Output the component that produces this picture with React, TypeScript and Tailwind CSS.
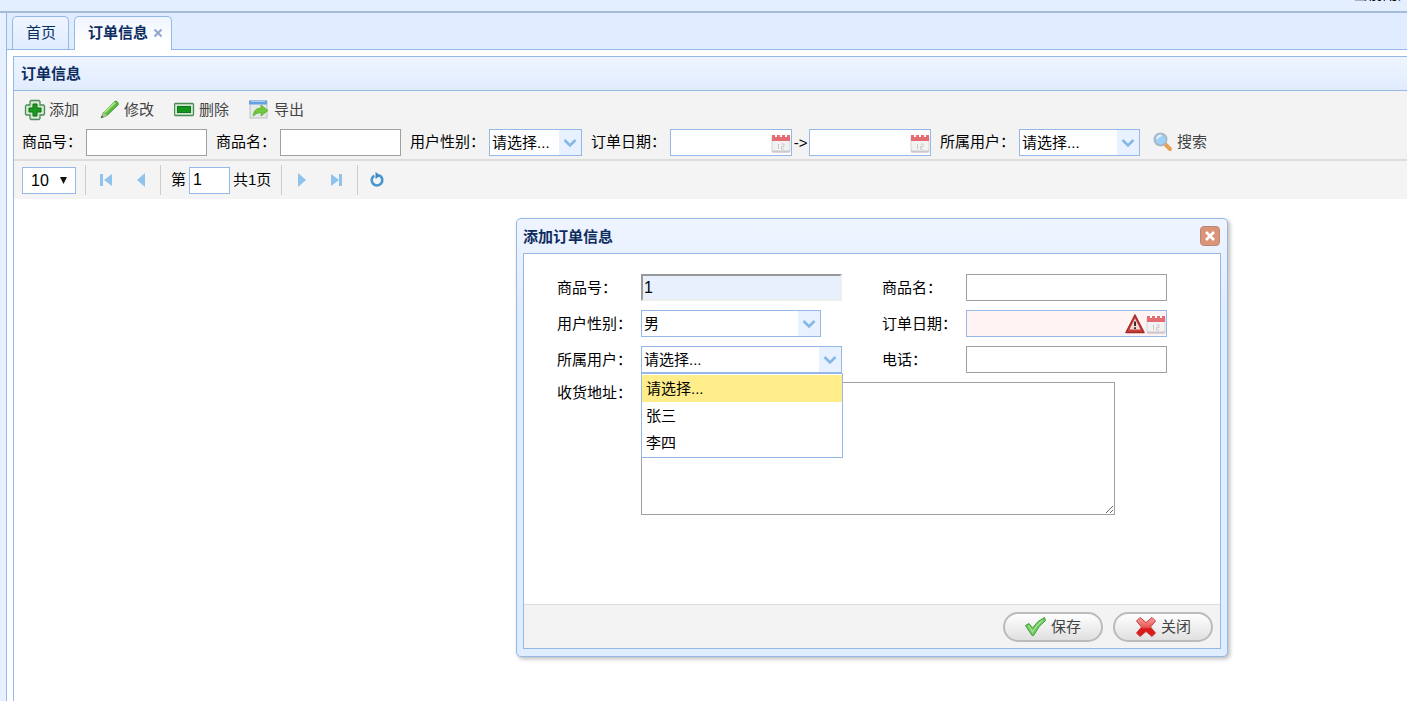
import type { ReactNode } from 'react';

const AddIcon = () => (
  <svg width="22" height="22" viewBox="0 0 22 22" aria-hidden="true">
    <path
      d="M7 1.5h8l1 1V6h3.5l1 1v8l-1 1H16v3.5l-1 1H7l-1-1V16H2.5l-1-1V7l1-1H6V2.500z"
      fill="#d3e8ce"
      stroke="#4c8a58"
      strokeWidth="1.3"
    />
    <path d="M9 5h4v4h4v4h-4v4H9v-4H5V9h4z" fill="#1c9a1c" stroke="#0d6d1c" strokeWidth="1" />
  </svg>
);

const EditIcon = () => (
  <svg width="22" height="22" viewBox="0 0 22 22" aria-hidden="true">
    <path d="M2 19l2.500-5.500L15.500 2.500q1.500-1 3 .5t.5 3L8 16.500z" fill="#5cba3d" stroke="#4b9a3c" />
    <path d="M5.500 13.500L16 3.500" stroke="#a9e28a" strokeWidth="2" />
    <path d="M2 19l2.500-5.500L8 16.500z" fill="#b9c59c" />
    <path d="M2 19l1-2.500 1.500 1.300z" fill="#355a35" />
  </svg>
);

const RemoveIcon = () => (
  <svg width="22" height="22" viewBox="0 0 22 22" aria-hidden="true">
    <rect x="0.500" y="4.500" width="19" height="12" rx="1" fill="#d3e8ce" stroke="#4c8a58" strokeWidth="1.300" />
    <rect x="3.500" y="7.500" width="13" height="6" fill="#14951c" stroke="#0d7420" />
  </svg>
);

const ExportIcon = () => (
  <svg width="22" height="22" viewBox="0 0 22 22" aria-hidden="true">
    <rect x="1" y="2" width="17" height="17" fill="#e5e8e6" stroke="#b9c3c6" />
    <path d="M0 1.500h18v4H0z" fill="#62a2df" />
    <path d="M2 2.500h14" stroke="#a8cdf0" />
    <path d="M4 17q1-8 8-8V6l7 5.500-7 5.500v-3.500q-4 0-8 3.500z" fill="#70c93c" stroke="#52a82f" strokeWidth=".7" />
  </svg>
);

const SearchIcon = () => (
  <svg width="20" height="20" viewBox="0 0 20 20" aria-hidden="true">
    <path d="M12 12l5 5" stroke="#e5a155" strokeWidth="4" strokeLinecap="round" />
    <circle cx="7.500" cy="7.500" r="6" fill="#9fd0f7" stroke="#a9b7c6" strokeWidth="2" />
    <path d="M4 7q1-3.500 4.500-3.500" fill="none" stroke="#e3f3ff" strokeWidth="2" />
  </svg>
);

const CalendarIcon = () => (
  <svg width="20" height="20" viewBox="0 0 20 20" aria-hidden="true">
    <rect x="1" y="3" width="18" height="16" rx="1" fill="#f3f2f2" stroke="#d5d2d5" />
    <path d="M1 17.500h18v2H1z" fill="#cbc8ce" />
    <path d="M1 2h18v6H1z" fill="#e36d72" />
    <path d="M4 1h2v3H4zM9 1h2v3H9zM14 1h2v3h-2z" fill="#fff" />
    <path d="M7.500 11v5M7 11.500h1M10.500 11h2.500v2.500h-2.500V16H13" fill="none" stroke="#cfc8c8" />
  </svg>
);

const WarningIcon = () => (
  <svg width="20" height="20" viewBox="0 0 20 20" aria-hidden="true">
    <path d="M10 1L19 18.500H1z" fill="#cb3f3a" stroke="#a12c2a" strokeWidth="1.500" strokeLinejoin="round" />
    <path d="M10 4.500l5.500 11h-11z" fill="#f4dcda" />
    <path d="M10 7.500v4.500M10 13.200v1.800" stroke="#2c1a1a" strokeWidth="1.800" />
  </svg>
);

const OkIcon = () => (
  <svg width="22" height="22" viewBox="0 0 22 22" aria-hidden="true">
    <path d="M.5 9.500L4 7.500 7.500 12q5-7.500 12-10.500l1 3Q14 9 8.500 19.500H7z" fill="#6cc95c" stroke="#3f9d43" />
    <path d="M3.500 9.500l4 6.500Q12 8.500 17.500 4.500" fill="none" stroke="#a5e595" strokeWidth="1.300" />
  </svg>
);

const CancelIcon = () => (
  <svg width="22" height="22" viewBox="0 0 22 22" aria-hidden="true">
    <defs>
      <linearGradient id="cancel" x2="0" y2="1">
        <stop offset="0" stopColor="#f5a3a0" />
        <stop offset=".5" stopColor="#e85a56" />
        <stop offset=".6" stopColor="#dd1a1a" />
      </linearGradient>
    </defs>
    <path
      d="M5 1.500l6 5 6-5 3.500 3.500-5 6 5 6-3.500 3.500-6-5-6 5L1.500 17l5-6-5-6z"
      fill="url(#cancel)"
      stroke="#c63c3c"
      strokeLinejoin="round"
    />
  </svg>
);

const Chevron = () => (
  <span className="pointer-events-none absolute inset-y-px right-px flex w-[22px] items-center justify-center bg-[#e8f1ff]">
    <svg width="14" height="10" viewBox="0 0 14 10" aria-hidden="true">
      <path d="M1.500 2L7 7.500 12.500 2" fill="none" stroke="#84b9e6" strokeWidth="2.600" />
    </svg>
  </span>
);

type ComboProps = { id: string; options: string[]; className: string };

const Combo = ({ id, options, className }: ComboProps) => (
  <div className={`relative ${className}`}>
    <select
      id={id}
      className="block h-[27px] w-full appearance-none border border-[#95b8e7] bg-white pr-6 pl-[2px] leading-[25px] outline-none">
      {options.map(option => (
        <option key={option}>{option}</option>
      ))}
    </select>
    <Chevron />
  </div>
);

type DateBoxProps = { id: string; label?: string; invalid?: boolean; className: string };

const DateBox = ({ id, label, invalid, className }: DateBoxProps) => (
  <div
    className={`flex h-[27px] items-center border border-[#95b8e7] ${invalid ? 'bg-[#fff3f3]' : 'bg-white'} ${className}`}>
    <input id={id} aria-label={label} type="text" className="min-w-0 flex-1 bg-transparent px-1 outline-none" />
    {invalid && <WarningIcon />}
    <button type="button" aria-label="日期" className="ml-px">
      <CalendarIcon />
    </button>
  </div>
);

const Field = ({ id, label, children }: { id: string; label: string; children: ReactNode }) => (
  <div className="flex items-center gap-1">
    <label htmlFor={id} className="-mt-0.5">
      {label}
    </label>
    {children}
  </div>
);

const Separator = () => <span className="h-[30px] w-px bg-[#ccc]" />;

const tools = [
  { text: '添加', icon: <AddIcon /> },
  { text: '修改', icon: <EditIcon /> },
  { text: '删除', icon: <RemoveIcon /> },
  { text: '导出', icon: <ExportIcon /> },
];

const users = ['请选择...', '张三', '李四'];

const textBox = 'h-[27px] border border-[#a0a0a0] bg-white px-1 outline-none';

const Toolbar = () => (
  <div className="border-b-2 border-[#ddd] bg-[#f3f3f3] pt-2 pr-2 pb-[3px] pl-2">
    <div className="flex gap-5 pl-[2px]">
      {tools.map(tool => (
        <button key={tool.text} type="button" className="flex h-[22px] items-center gap-[3px] text-[#444]">
          {tool.icon}
          {tool.text}
        </button>
      ))}
    </div>
    <div className="mt-2 flex flex-wrap items-center gap-x-[9px]">
      <Field id="goods-no" label="商品号：">
        <input id="goods-no" type="text" className={`w-[121px] ${textBox}`} />
      </Field>
      <Field id="goods-name" label="商品名：">
        <input id="goods-name" type="text" className={`w-[121px] ${textBox}`} />
      </Field>
      <Field id="sex" label="用户性别：">
        <Combo id="sex" options={['请选择...', '男', '女']} className="w-[93px]" />
      </Field>
      <Field id="date-from" label="订单日期：">
        <DateBox id="date-from" className="w-[122px]" />
        <span className="-mx-1 w-[17px] text-center">-&gt;</span>
        <DateBox id="date-to" label="订单日期" className="w-[122px]" />
      </Field>
      <Field id="owner" label="所属用户：">
        <Combo id="owner" options={users} className="w-[121px]" />
      </Field>
      <button type="button" className="ml-1 flex items-center gap-1 pb-0.5 text-[#444]">
        <SearchIcon />
        搜索
      </button>
    </div>
  </div>
);

const Pager = () => (
  <div className="flex h-[38px] items-center bg-[#f4f4f4] pl-2 text-base">
    <div className="relative mr-[9px]">
      <select
        aria-label="每页条数"
        className="block h-[27px] w-[54px] appearance-none border border-[#95b8e7] bg-white pl-2 leading-[25px] outline-none">
        <option>10</option>
        <option>20</option>
      </select>
      <svg className="pointer-events-none absolute top-[10px] right-[9px]" width="7" height="7" viewBox="0 0 8 8">
        <path d="M0 0h8L4 8z" fill="#111" />
      </svg>
    </div>
    <Separator />
    <button type="button" aria-label="首页" className="ml-[14px]">
      <svg width="12" height="14" viewBox="0 0 12 14">
        <path d="M0 1h3v12H0zM12 1v12L4 7z" fill="#8fc3ec" />
      </svg>
    </button>
    <button type="button" aria-label="上一页" className="mr-[14px] ml-6">
      <svg width="10" height="14" viewBox="0 0 10 14">
        <path d="M9 0v14L1 7z" fill="#8fc3ec" />
      </svg>
    </button>
    <Separator />
    <label htmlFor="page" className="ml-[10px] text-[15px]">
      第
    </label>
    <input
      id="page"
      type="text"
      defaultValue="1"
      className="mx-[3px] h-[27px] w-[41px] border border-[#95b8e7] bg-white px-[3px] outline-none"
    />
    <span className="mr-[10px] text-[15px]">共1页</span>
    <Separator />
    <button type="button" aria-label="下一页" className="ml-[15px]">
      <svg width="10" height="14" viewBox="0 0 10 14">
        <path d="M1 0v14l8-7z" fill="#8fc3ec" />
      </svg>
    </button>
    <button type="button" aria-label="末页" className="mr-[14px] ml-6">
      <svg width="12" height="14" viewBox="0 0 12 14">
        <path d="M0 1v12l8-6zM8 1h3v12H8z" fill="#8fc3ec" />
      </svg>
    </button>
    <Separator />
    <button type="button" aria-label="刷新" className="ml-[11px]">
      <svg width="16" height="16" viewBox="0 0 16 16">
        <path d="M10.500 3.500A5.300 5.300 0 1 1 5.300 3.600" fill="none" stroke="#4596d1" strokeWidth="2.600" />
        <path d="M6.500 0l5 3.500-5 3.500z" fill="#3a8cca" />
      </svg>
    </button>
  </div>
);

const OrderDialog = () => (
  <div
    role="dialog"
    aria-labelledby="dialog-title"
    className="absolute top-[218px] left-[516px] w-[712px] rounded-[5px] border border-[#95b8e7] bg-[#e0ecff] bg-linear-to-b from-[#eff5ff] to-[#e0ecff] to-20% p-[6px] pb-[7px] shadow-[2px_2px_4px_#bbb]">
    <div className="flex h-7 items-start justify-between">
      <h2 id="dialog-title" className="pt-0.5 font-bold text-[#0e2d5f]">
        添加订单信息
      </h2>
      <button
        type="button"
        aria-label="关闭窗口"
        className="mt-px mr-px flex size-5 items-center justify-center rounded-[4px] border border-[#b98672] bg-[#dc9478]">
        <svg width="12" height="12" viewBox="0 0 12 12">
          <path d="M2 2l8 8M10 2l-8 8" stroke="#fff" strokeWidth="2.600" />
        </svg>
      </button>
    </div>

    <div className="border border-[#95b8e7] bg-white">
      <form className="grid min-h-[350px] grid-cols-[84px_241px_84px_201px] content-start items-start gap-y-2 pt-5 pl-[33px]">
        <label htmlFor="f-no" className="leading-7">
          商品号：
        </label>
        <input
          id="f-no"
          type="text"
          readOnly
          value="1"
          className="h-[27px] w-[201px] border-2 border-t-[#999] border-r-[#eee] border-b-[#eee] border-l-[#999] bg-[#e8f0fe] px-px text-base outline-none"
        />
        <label htmlFor="f-name" className="leading-7">
          商品名：
        </label>
        <input id="f-name" type="text" className={textBox} />

        <label htmlFor="f-sex" className="leading-7">
          用户性别：
        </label>
        <Combo id="f-sex" options={['男', '女']} className="w-[180px]" />
        <label htmlFor="f-date" className="leading-7">
          订单日期：
        </label>
        <DateBox id="f-date" invalid className="w-full" />

        <label htmlFor="f-owner" className="leading-7">
          所属用户：
        </label>
        <div className="relative w-[201px]">
          <Combo id="f-owner" options={users} className="w-full" />
          <ul className="absolute top-full left-0 w-[202px] border border-[#95b8e7] bg-white py-px">
            {users.map((user, index) => (
              <li key={user} className={`h-[27px] px-1 leading-[27px] ${index === 0 ? 'bg-[#ffec8b]' : ''}`}>
                {user}
              </li>
            ))}
          </ul>
        </div>
        <label htmlFor="f-phone" className="leading-7">
          电话：
        </label>
        <input id="f-phone" type="text" className={textBox} />

        <label htmlFor="f-address" className="pt-px">
          收货地址：
        </label>
        <textarea
          id="f-address"
          className="col-span-3 block h-[133px] w-[474px] border border-[#a0a0a0] bg-white p-1 outline-none"
        />
      </form>

      <div className="flex justify-end gap-[10px] border-t border-[#ddd] bg-[#f3f3f3] px-[7px] pt-[7px] pb-[6px]">
        <button
          type="button"
          className="flex h-[30px] w-[100px] items-center justify-center gap-1 rounded-full border-2 border-[#bbb] bg-linear-to-b from-white to-[#e0e0e0] text-[#444]">
          <OkIcon />
          保存
        </button>
        <button
          type="button"
          className="flex h-[30px] w-[100px] items-center justify-center gap-1 rounded-full border-2 border-[#bbb] bg-linear-to-b from-white to-[#e0e0e0] text-[#444]">
          <CancelIcon />
          关闭
        </button>
      </div>
    </div>
  </div>
);

const App = () => {
  return (
    <div className="relative flex min-h-screen flex-col overflow-hidden bg-white font-['Liberation_Sans','Noto_Sans_CJK_SC',sans-serif] text-[15px] leading-5 text-black">
      <header className="flex h-[13px] items-end justify-end overflow-hidden border-b-2 border-[#a3bad9] bg-[#e3eeff] pb-[7px]">
        <span className="w-[54px] whitespace-nowrap">当前用户</span>
      </header>

      <div className="flex flex-1">
        <aside className="w-[7px] border-r border-[#95b8e7] bg-[#e6f0ff]" />

        <main className="flex min-w-0 flex-1 flex-col">
          <nav className="flex h-[37px] items-end gap-[5px] border-b border-[#95b8e7] bg-[#e0ecff] pl-[5px]">
            <a
              href="#home"
              className="flex h-[33px] items-center rounded-t-[5px] border border-b-0 border-[#95b8e7] bg-linear-to-b from-[#eff5ff] to-[#e0ecff] pr-3 pl-[13px] text-[#0e2d5f]">
              首页
            </a>
            <div className="-mb-px flex h-[34px] items-center gap-[5px] rounded-t-[5px] border border-b-0 border-[#95b8e7] bg-linear-to-b from-[#eff5ff] to-white to-80% pr-2 pb-0.5 pl-[13px]">
              <a href="#orders" className="font-bold text-[#0e2d5f]">
                订单信息
              </a>
              <button type="button" aria-label="关闭标签">
                <svg width="10" height="10" viewBox="0 0 10 10">
                  <path d="M1.500 1.500l7 7M8.500 1.500l-7 7" stroke="#93a5cb" strokeWidth="2" />
                </svg>
              </button>
            </div>
          </nav>

          <section className="mt-[6px] ml-[6px] flex-1 border-t border-l border-[#95b8e7]">
            <h1 className="flex h-[34px] items-center border-b border-[#95b8e7] bg-linear-to-b from-[#eff5ff] to-[#e0ecff] pl-[7px] font-bold text-[#0e2d5f]">
              订单信息
            </h1>
            <Toolbar />
            <Pager />
          </section>
        </main>
      </div>

      <OrderDialog />
    </div>
  );
};

export default App;
